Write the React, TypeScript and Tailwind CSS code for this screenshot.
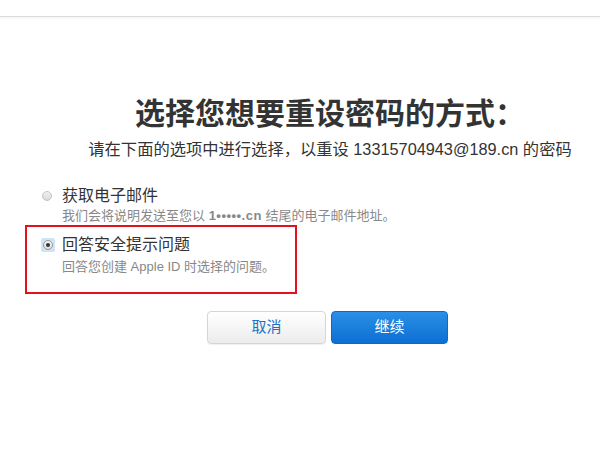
import React from "react";

const font = { fontFamily: '"Liberation Sans", "Noto Sans CJK SC", sans-serif' };

function Radio({ checked }: { checked?: boolean }) {
  if (checked) {
    return (
      <span className="flex h-[14px] w-[14px] items-center justify-center rounded-[2px] bg-[#cfe2f6]">
        <span className="flex h-[10px] w-[10px] items-center justify-center rounded-full border border-[#9a9a9a] bg-gradient-to-b from-[#f4f4f4] to-[#dcdcdc]">
          <span className="h-[4px] w-[4px] rounded-full bg-[#333]" />
        </span>
      </span>
    );
  }
  return (
    <span className="flex h-[14px] w-[14px] items-center justify-center">
      <span className="flex h-[10px] w-[10px] items-center justify-center rounded-full border border-[#c4c4c4] bg-gradient-to-b from-[#f2f2f2] to-[#d8d8d8]">
        <span className="h-[4px] w-[4px] rounded-full bg-[#e6e6e6]" />
      </span>
    </span>
  );
}

export default function App() {
  return (
    <div className="h-[453px] w-[600px] bg-white text-[#333]" style={font}>
      <div className="h-[16px] bg-white" />
      <div className="h-px bg-[#dcdcdc]" />
      <div className="h-[3px] bg-gradient-to-b from-[#f3f3f3] to-white" />
      <h1 className="mt-[76px] pl-[60px] text-center text-[30px] font-bold leading-[36px] text-[#333]">
        选择您想要重设密码的方式：
      </h1>
      <p className="mt-[7px] pl-[60px] text-center text-[16.3px] leading-[20px] text-[#333]">
        请在下面的选项中进行选择，以重设 13315704943@189.cn 的密码
      </p>
      <div className="mt-[27px] flex flex-col">
        <div className="flex items-start pl-[40px]">
          <div className="flex h-[20px] items-center">
            <Radio />
          </div>
          <div className="ml-[8px] flex flex-col">
            <span className="text-[16px] leading-[20px] text-[#333]">获取电子邮件</span>
            <span className="mt-[1px] text-[13px] leading-[18px] text-[#888]">
              我们会将说明发送至您以 <span className="font-bold tracking-[0.5px]">1•••••.cn</span> 结尾的电子邮件地址。
            </span>
          </div>
        </div>
        <div className="ml-[25px] mt-[0px] h-[69px] w-[272px] border-2 border-[#e3101e] pl-[14px] pt-[8px]">
          <div className="flex items-start">
            <div className="flex h-[20px] items-center">
              <Radio checked />
            </div>
            <div className="ml-[7px] flex flex-col">
              <span className="text-[16px] leading-[20px] text-[#333]">回答安全提示问题</span>
              <span className="mt-[3px] text-[13px] leading-[18px] text-[#888]">
                回答您创建 Apple ID 时选择的问题。
              </span>
            </div>
          </div>
        </div>
        <div className="mt-[17px] flex gap-[5px] pl-[207px]">
          <button className="h-[33px] w-[119px] rounded-[4px] border border-[#d6d6d6] bg-gradient-to-b from-white to-[#ececec] text-[15px] text-[#1a73c9] shadow-[0_1px_1px_rgba(0,0,0,0.06)]">
            取消
          </button>
          <button className="h-[33px] w-[117px] rounded-[4px] border border-[#0b6bc8] bg-gradient-to-b from-[#2a8fe6] to-[#0b6fd3] text-[15px] text-white">
            继续
          </button>
        </div>
      </div>
    </div>
  );
}
